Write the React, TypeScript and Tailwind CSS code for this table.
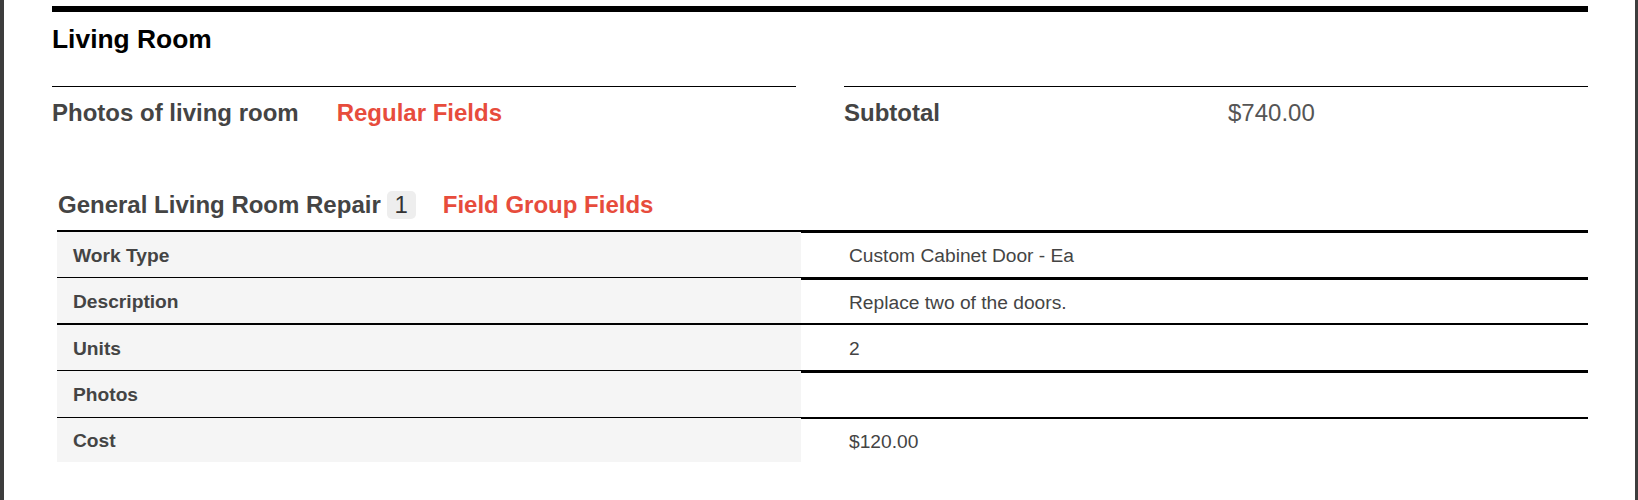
import React from "react";

const rows = [
  {
    label: "Work Type",
    value: "Custom Cabinet Door - Ea",
    height: "h-[47px]",
    leftBorder: "border-t-2",
    rightBorder: "border-t-[3px]",
  },
  {
    label: "Description",
    value: "Replace two of the doors.",
    height: "h-[46px]",
    leftBorder: "border-t",
    rightBorder: "border-t-[3px]",
  },
  {
    label: "Units",
    value: "2",
    height: "h-[47px]",
    leftBorder: "border-t-2",
    rightBorder: "border-t-[2px]",
  },
  {
    label: "Photos",
    value: "",
    height: "h-[47px]",
    leftBorder: "border-t",
    rightBorder: "border-t-[3px]",
  },
  {
    label: "Cost",
    value: "$120.00",
    height: "h-[45px]",
    leftBorder: "border-t",
    rightBorder: "border-t-[2px]",
  },
];

export default function App() {
  return (
    <div className="h-[500px] w-full overflow-hidden border-l-4 border-r-[3px] border-[#3d3d3d] bg-white font-['Liberation_Sans',Arial,sans-serif]">
      <div className="pl-[48px] pr-[47px] pt-[6px]">
        <div className="h-[6px] bg-black" />

        <h2 className="mt-[12px] text-[26.4px] leading-[30px] font-bold text-black">
          Living Room
        </h2>

        {/* Regular fields */}
        <div className="mt-[32px] grid grid-cols-2 gap-x-[48px]">
          <div className="flex border-t border-black pt-[12px]">
            <span className="text-[24px] leading-[28px] font-bold text-[#444]">
              Photos of living room
            </span>
            <span className="ml-[38px] text-[24px] leading-[28px] font-bold text-[#e74c3c]">
              Regular Fields
            </span>
          </div>
          <div className="flex border-t border-black pt-[12px]">
            <span className="w-[384px] text-[24px] leading-[28px] font-bold text-[#444]">
              Subtotal
            </span>
            <span className="text-[24px] leading-[28px] text-[#555]">$740.00</span>
          </div>
        </div>

        {/* Field group */}
        <section className="ml-[5px] mt-[64px]">
          <div className="flex items-center">
            <h3 className="pl-[1px] text-[24px] leading-[28px] font-bold text-[#444]">
              General Living Room Repair
            </h3>
            <span className="ml-[6px] flex h-[28px] w-[29px] items-center justify-center rounded-[5px] bg-[#eee] text-[24px] leading-none text-[#333]">
              1
            </span>
            <span className="ml-[27px] text-[24px] leading-[28px] font-bold text-[#e74c3c]">
              Field Group Fields
            </span>
          </div>

          <div className="mt-[11px]">
            {rows.map((row) => (
              <div key={row.label} className={`grid grid-cols-[744px_1fr] ${row.height}`}>
                <div
                  className={`flex items-center border-black bg-[#f5f5f5] pl-[16px] pt-[3px] text-[19.2px] font-bold text-[#444] ${row.leftBorder}`}
                >
                  {row.label}
                </div>
                <div
                  className={`flex items-center border-black pl-[48px] pt-[3px] text-[19.2px] text-[#444] ${row.rightBorder}`}
                >
                  {row.value}
                </div>
              </div>
            ))}
          </div>
        </section>
      </div>
    </div>
  );
}
